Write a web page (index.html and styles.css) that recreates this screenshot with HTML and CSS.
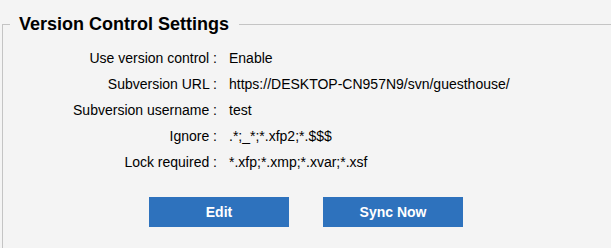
FILE: index.html
```html
<!DOCTYPE html>
<html>
<head>
    <meta charset="UTF-8">
    <title>Version Control Settings</title>
    <link rel="stylesheet" href="styles.css">
</head>
<body>
    <fieldset class="settings-box">
        <legend>Version Control Settings</legend>

        <div class="settings-grid">
            <span class="setting-label">Use version control :</span>
            <span class="setting-value">Enable</span>

            <span class="setting-label">Subversion URL :</span>
            <span class="setting-value">https://DESKTOP-CN957N9/svn/guesthouse/</span>

            <span class="setting-label">Subversion username :</span>
            <span class="setting-value">test</span>

            <span class="setting-label">Ignore :</span>
            <span class="setting-value">.*;_*;*.xfp2;*.$$$</span>

            <span class="setting-label">Lock required :</span>
            <span class="setting-value">*.xfp;*.xmp;*.xvar;*.xsf</span>
        </div>

        <div class="button-row">
            <button id="editButton">Edit</button>
            <button id="syncButton">Sync Now</button>
        </div>
    </fieldset>
</body>
</html>
```

FILE: styles.css
```css
html, body {
    margin: 0;
    height: 100%;
    overflow: hidden;
}

body {
    background-color: #f4f4f4;
    font-family: "Liberation Sans", Arial, sans-serif;
    font-size: 14px;
    color: #000;
}

.settings-box {
    margin: 14px 0 0 2px;
    padding: 0 0 40px 0;
    width: 700px;
    border: 1px solid #c4c4c4;
    border-right: none;
}

legend {
    margin-left: 7px;
    padding: 0 10px 0 9px;
    font-size: 18px;
    font-weight: bold;
    line-height: 20px;
}

.settings-grid {
    display: grid;
    grid-template-columns: 214px auto;
    column-gap: 12px;
    margin-top: 11px;
    line-height: 26px;
}

.setting-label {
    text-align: right;
}

.button-row {
    display: flex;
    gap: 34px;
    margin: 22px 0 0 146px;
}

button {
    width: 140px;
    height: 30px;
    padding: 0;
    border: none;
    background-color: #2e72bd;
    color: #fff;
    font-family: "Liberation Sans", Arial, sans-serif;
    font-size: 14px;
    font-weight: bold;
    cursor: pointer;
}

button:hover {
    background-color: #2865a8;
}
```
